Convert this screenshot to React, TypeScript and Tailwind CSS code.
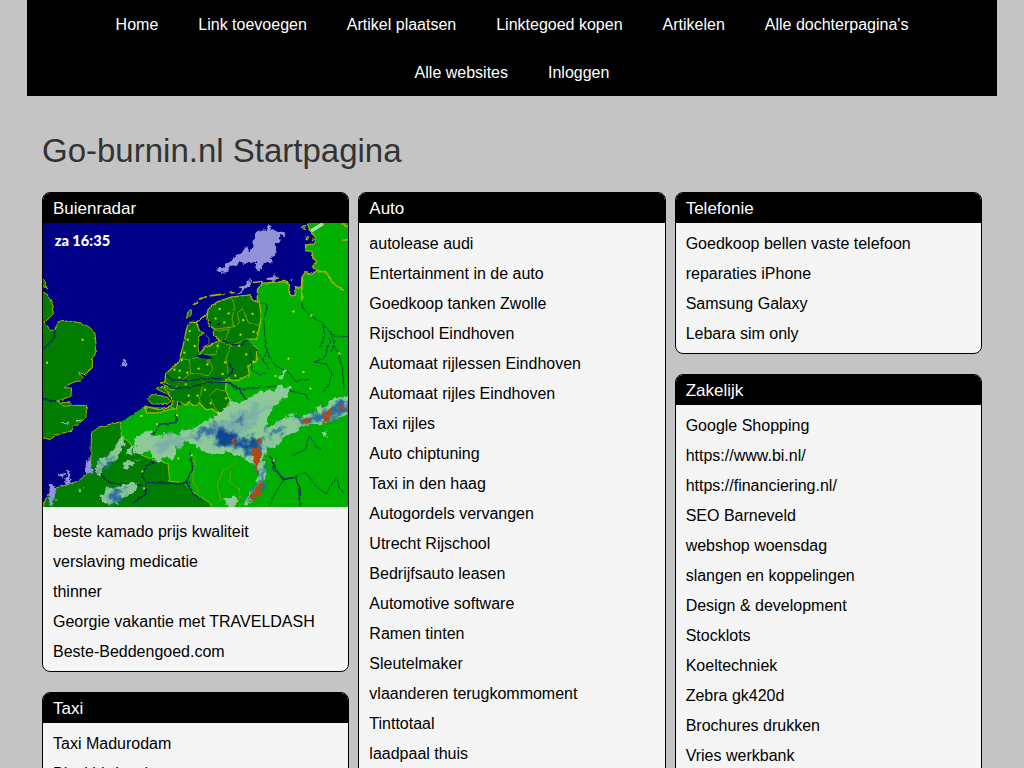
import React from 'react';

interface LinkBlock {
  title: string;
  links: string[];
  radar?: boolean;
}

const menu = [
  'Home',
  'Link toevoegen',
  'Artikel plaatsen',
  'Linktegoed kopen',
  'Artikelen',
  "Alle dochterpagina's",
  'Alle websites',
  'Inloggen',
];

const columns: LinkBlock[][] = [
  [
    {
      title: 'Buienradar',
      radar: true,
      links: [
        'beste kamado prijs kwaliteit',
        'verslaving medicatie',
        'thinner',
        'Georgie vakantie met TRAVELDASH',
        'Beste-Beddengoed.com',
      ],
    },
    { title: 'Taxi', links: ['Taxi Madurodam', 'Blackbird taxi west'] },
  ],
  [
    {
      title: 'Auto',
      links: [
        'autolease audi',
        'Entertainment in de auto',
        'Goedkoop tanken Zwolle',
        'Rijschool Eindhoven',
        'Automaat rijlessen Eindhoven',
        'Automaat rijles Eindhoven',
        'Taxi rijles',
        'Auto chiptuning',
        'Taxi in den haag',
        'Autogordels vervangen',
        'Utrecht Rijschool',
        'Bedrijfsauto leasen',
        'Automotive software',
        'Ramen tinten',
        'Sleutelmaker',
        'vlaanderen terugkommoment',
        'Tinttotaal',
        'laadpaal thuis',
      ],
    },
  ],
  [
    {
      title: 'Telefonie',
      links: ['Goedkoop bellen vaste telefoon', 'reparaties iPhone', 'Samsung Galaxy', 'Lebara sim only'],
    },
    {
      title: 'Zakelijk',
      links: [
        'Google Shopping',
        'https://www.bi.nl/',
        'https://financiering.nl/',
        'SEO Barneveld',
        'webshop woensdag',
        'slangen en koppelingen',
        'Design & development',
        'Stocklots',
        'Koeltechniek',
        'Zebra gk420d',
        'Brochures drukken',
        'Vries werkbank',
      ],
    },
  ],
];

// weather stations, shown as small yellow squares
const stations = [
  [531, 259], [558, 272], [519, 287], [545, 299], [602, 292], [630, 273], [594, 336], [633, 327],
  [441, 325], [435, 351], [456, 370], [425, 390], [417, 412], [411, 444], [395, 441], [434, 450],
  [410, 465], [468, 438], [494, 425], [525, 369], [548, 419], [540, 454], [590, 369], [611, 395],
  [633, 417], [578, 459], [438, 519], [465, 519], [487, 501], [504, 542], [550, 527], [529, 575],
  [429, 485], [119, 351], [12, 420], [296, 580], [343, 605], [403, 578], [753, 266], [807, 278],
  [738, 408], [783, 448], [699, 460], [804, 498], [891, 392], [717, 504], [407, 708], [299, 747],
  [304, 798], [365, 702], [447, 698], [694, 714], [563, 838], [170, 757], [433, 634],
];

const RadarMap: React.FC = () => (
  <svg viewBox="0 0 918 854" className="block w-full h-auto" role="img" aria-label="Buienradar">
    <defs>
      <filter id="ragged" x="-10%" y="-10%" width="120%" height="120%">
        <feTurbulence type="fractalNoise" baseFrequency="0.05" numOctaves="3" seed="4" result="noise" />
        <feDisplacementMap in="SourceGraphic" in2="noise" scale="30" xChannelSelector="R" yChannelSelector="G" />
      </filter>
      <filter id="cloud" x="-20%" y="-20%" width="140%" height="140%">
        <feGaussianBlur stdDeviation="7" result="soft" />
        <feTurbulence type="fractalNoise" baseFrequency="0.04" numOctaves="3" seed="9" result="noise" />
        <feDisplacementMap in="soft" in2="noise" scale="60" xChannelSelector="R" yChannelSelector="G" />
      </filter>
      <filter id="coast" x="-5%" y="-5%" width="110%" height="110%">
        <feTurbulence type="fractalNoise" baseFrequency="0.06" numOctaves="2" seed="2" result="noise" />
        <feDisplacementMap in="SourceGraphic" in2="noise" scale="9" xChannelSelector="R" yChannelSelector="G" />
      </filter>
    </defs>
    <rect width="918" height="854" fill="#000086" />

    <g filter="url(#coast)" strokeLinejoin="round">
      {/* Germany, Belgium and Luxembourg */}
      <path
        fill="#00af00"
        d="M791 -10 799 13 811 31 823 49 816 63 789 66 791 83 809 86 811 106 824 116 809 129 821 146 799 153 789 147 779 163 777 191 771 198 756 191 759 216 746 219 739 206 741 186 726 176 661 181 645 199 644 234 656 238 540 500 386 556 306 551 270 575 233 598 233 870 940 870 940 -10Z"
      />
      <path
        fill="none"
        stroke="#a4b400"
        strokeWidth="4"
        d="M791 -10 799 13 811 31 823 49 816 63 789 66 791 83 809 86 811 106 824 116 809 129 821 146 799 153 789 147 779 163 777 191 771 198 756 191 759 216 746 219 739 206 741 186 726 176 661 181 645 199 644 234 656 238"
      />
      <path fill="none" stroke="#a4b400" strokeWidth="5" d="M821 146 848 146 862 162 870 180 890 196 905 202M779 163 778 232M900 0 918 12M900 52 918 50" />
      {/* England */}
      <path
        fill="#007d00"
        stroke="#a4b400"
        strokeWidth="3"
        d="M-20 196 0 206 16 219 31 251 31 273 3 301 13 309 21 323 36 321 43 301 56 293 88 296 116 301 141 314 156 331 161 381 149 411 148 436 126 456 104 448 122 466 116 471 95 478 81 484 66 496 86 496 84 521 41 536 66 541 86 548 131 549 129 586 110 600 91 611 88 626 58 632 36 641 21 651 0 646 -20 646Z"
      />
      <path fill="#007d00" stroke="#a4b400" strokeWidth="3" d="M-10 160 4 172 14 198 0 188Z" />
      <ellipse cx="70" cy="545" rx="16" ry="6" fill="#007d00" stroke="#a4b400" strokeWidth="3" />
      {/* France */}
      <path
        fill="#007d00"
        stroke="#a4b400"
        strokeWidth="3"
        d="M233 598 169 613 146 631 143 731 131 756 106 776 41 796 11 821 -4 870 515 870 501 841 471 821 446 806 426 783 381 776 376 723 341 716 291 696 253 654 236 646Z"
      />
      {/* Netherlands */}
      <path
        fill="#007d00"
        stroke="#a4b400"
        strokeWidth="4"
        d="M439 299 461 299 471 326 483 331 469 346 468 376 471 396 486 376 531 353 511 336 516 319 501 309 493 291 496 261 521 239 566 223 621 216 631 233 651 241 657 281 643 349 616 349 643 381 641 416 616 431 621 456 586 473 551 471 549 506 565 531 546 566 526 573 506 559 490 562 471 541 451 549 440 536 430 548 406 536 401 561 386 556 351 571 311 571 307 551 350 562 386 548 391 535 366 500 366 481 369 453 406 421 421 371 431 321Z"
      />
      <path fill="#007d00" stroke="#a4b400" strokeWidth="3" d="M316 531 326 516 366 521 386 536 371 546 326 543ZM336 496 356 491 381 511 366 511ZM352 480 368 478 396 500 384 502Z" />
      <path fill="#000086" stroke="#a4b400" strokeWidth="2" d="M483 331 498 345 500 362 486 372 470 392 466 372 469 346Z" />
      {/* Wadden islands and the Afsluitdijk */}
      <path fill="none" stroke="#a4b400" strokeWidth="5" d="M461 299 493 273M451 246 466 236M471 229 493 221M501 219 546 213M561 211 579 209M631 179 661 176M681 169 706 166M745 172 750 172M590 194 620 188" />
      <path fill="#007d00" stroke="#a4b400" strokeWidth="3" d="M432 287 434 270 446 258 446 276ZM776 12 790 10 786 20ZM790 40 800 42 794 52ZM808 46 820 50 812 56Z" />

      {/* province borders */}
      <g fill="none" stroke="#7c9c00" strokeWidth="3">
        <path d="M566 223 576 250 568 290 576 312 516 319M576 312 590 300 584 270 600 258 618 300 650 308M516 319 530 325 560 318 548 350 531 353M531 353 562 370 616 349M562 370 550 410 560 470" />
        <path d="M411 407 440 412 450 405 496 402 510 440 500 456 444 452 440 412M471 396 520 396 531 353M496 402 496 430M444 452 420 470 390 505M471 541 480 480 550 476" />
        <path d="M526 573 500 520 520 500 549 506M236 646 256 654M524 790 540 745 570 728 582 714M524 790 536 836M565 745 560 780 590 800 590 850M458 696 450 780 470 810" />
      </g>
      {/* rivers and state borders */}
      <g fill="none" stroke="#005040" strokeWidth="3">
        <path d="M656 238 674 246 664 290 666 330 674 380 660 420M777 232 780 256 800 275 840 300 848 340 830 376M840 300 860 325 880 340 918 342M864 330 876 360 868 385" />
        <path d="M860 345 866 360 856 370 850 400 830 412 814 418 850 424 868 448 860 490 840 508M882 351 870 370 890 390 900 440 906 500M616 349 640 380 680 440M664 351 680 400 700 430 740 450 760 478 800 470M620 380 630 440 650 456 670 450" />
        <path d="M571 500 640 498 700 490 750 506 790 516 800 530M700 706 690 740 730 770 760 764 790 750 820 790 850 815 880 765 900 810M722 775 700 810 680 850M750 700 790 680 800 640 820 670 836 680" />
      </g>
      <g fill="none" stroke="#00285e" strokeWidth="4">
        <path d="M370 458 390 472 440 474 490 468 540 468M366 484 400 498 450 492 500 478 560 480 590 500 610 530 620 560 640 600 650 640M540 350 560 364 600 366 612 352M560 420 570 446 556 462" />
        <path d="M401 570 400 600 350 605 333 634 310 650M340 716 310 730 298 760 310 780 410 784 440 778M310 784 310 814 270 842M441 690 450 740 430 780 450 812 476 832M680 700 700 740 722 772 760 764 770 800 772 850M150 735 200 780 230 785 300 788" />
        <path d="M0 530 40 536M0 380 32 348 36 322" />
      </g>
      <path fill="#000086" d="M460 400 480 394 510 404 496 410ZM850 372 860 368 856 376ZM496 298 508 294 504 304ZM520 306 534 300 530 308Z" />
    </g>

    {stations.map(([x, y]) => (
      <rect key={`${x}-${y}`} x={x - 3} y={y - 3} width="6" height="6" fill="#c8dc00" />
    ))}

    {/* showers over sea */}
    <g fill="#9292d8" filter="url(#ragged)">
      <path d="M518 148 550 124 582 96 606 80 628 84 634 64 630 44 652 24 666 22 674 4 692 22 720 32 716 52 700 60 702 90 690 104 694 118 664 118 652 146 642 142 640 118 606 116 568 134 530 150Z" />
      <path d="M580 218 600 190 626 172 618 194ZM670 174 696 156 700 168 680 178ZM235 420 250 414 252 430 240 430Z" />
      <path d="M130 725 142 705 144 760 130 745ZM20 790 38 786 34 850 18 850ZM48 760 60 750 62 764ZM70 745 80 750 88 784 70 780Z" />
    </g>
    <path stroke="#b0dcb4" strokeWidth="10" d="M806 24 842 2" />
    <g fill="#98cca4" fillOpacity=".93" filter="url(#ragged)">
      <path d="M276 651 311 624 341 641 411 633 471 606 521 581 561 540 600 536 646 512 701 500 731 486 746 491 736 516 701 546 681 576 666 616 711 596 731 576 771 586 821 561 871 531 940 512 940 572 861 596 786 613 751 626 716 651 706 676 671 666 663 721 666 761 651 801 621 841 601 846 641 781 651 746 636 731 591 701 541 686 491 691 461 676 431 656 401 671 391 706 341 713 311 681 291 696 276 696Z" />
      <path d="M152 742 170 716 216 680 240 642 246 664 226 700 186 728 166 758ZM256 670 276 660 270 700 256 690ZM236 725 280 710 270 732 240 738ZM700 466 730 446 736 450 718 470Z" />
      <path d="M172 822 200 794 240 786 284 784 284 808 252 816 236 838 200 846 180 842ZM545 826 582 822 584 850 550 850ZM842 625 856 625 856 644 842 640ZM55 595 74 595 74 602 55 602ZM96 596 126 590 112 602ZM104 802 118 796 110 810Z" />
    </g>
    <g filter="url(#cloud)">
      <path fill="#7cb0a8" d="M330 655 380 645 460 625 540 590 600 560 680 545 640 590 600 630 540 660 460 640 380 680 340 690Z" />
      <path fill="#286aa0" d="M436 640 500 608 530 600 500 640ZM515 625 560 620 600 645 660 650 672 680 650 710 610 690 560 672 520 665ZM670 636 715 604 720 618 690 644ZM650 720 668 740 662 790 620 835 618 820 650 780Z" />
      <path fill="#286aa0" d="M770 590 830 572 870 548 930 530 930 560 860 586 800 606 770 606ZM160 742 190 708 220 700 190 734ZM190 828 210 800 250 798 240 822 205 838ZM570 590 610 575 600 598 575 604Z" />
      <path fill="#08408c" d="M525 630 550 632 600 656 650 658 640 676 580 664 530 655Z" />
    </g>
    <g fill="#b04a14" filter="url(#ragged)">
      <path d="M628 686 648 664 652 690 658 706 646 726 642 746 634 720ZM620 836 640 794 658 776 660 796 632 838ZM838 592 842 572 868 556 862 588 846 600ZM890 556 906 548 900 564ZM780 588 806 586 806 600 784 602Z" />
      <path d="M566 654 580 654 578 666ZM645 658 658 650 654 668ZM682 678 694 678 688 688Z" />
    </g>

    <text x="35" y="68" fill="#ffffff" className="font-['Lato'] text-[44px] font-black">
      za 16:35
    </text>
  </svg>
);

const Block: React.FC<{ block: LinkBlock }> = ({ block }) => (
  <section className="mb-5 overflow-hidden rounded-lg border border-black bg-[#f5f5f5] last:pb-6">
    <h2 className="bg-black px-2.5 pt-0.5 text-[17px] leading-[28px] text-white">{block.title}</h2>
    {block.radar && (
      <a href="#" className="mb-1 block">
        <RadarMap />
      </a>
    )}
    <ul className="px-2.5 pt-1.5 pb-1">
      {block.links.map((link) => (
        <li key={link} className="leading-[30px]">
          <a href="#">{link}</a>
        </li>
      ))}
    </ul>
  </section>
);

export default function App() {
  return (
    <div className="h-screen overflow-hidden bg-[#c4c4c4] font-['Liberation_Sans',Arial,sans-serif] text-base text-black">
      <div className="mx-auto max-w-[970px]">
        <nav className="bg-black px-4">
          <ul className="flex flex-wrap justify-center">
            {menu.map((item) => (
              <li key={item}>
                <a href="#" className="block px-5 pt-0.5 leading-[46px] text-white">
                  {item}
                </a>
              </li>
            ))}
          </ul>
        </nav>
        <main className="px-[15px] pt-[33px]">
          <h1 className="mb-[19px] text-[33px] leading-[44px] text-[#333]">Go-burnin.nl Startpagina</h1>
          <div className="grid grid-cols-3 items-start gap-[9px]">
            {columns.map((blocks, i) => (
              <div key={i}>
                {blocks.map((block) => (
                  <Block key={block.title} block={block} />
                ))}
              </div>
            ))}
          </div>
        </main>
      </div>
    </div>
  );
}
